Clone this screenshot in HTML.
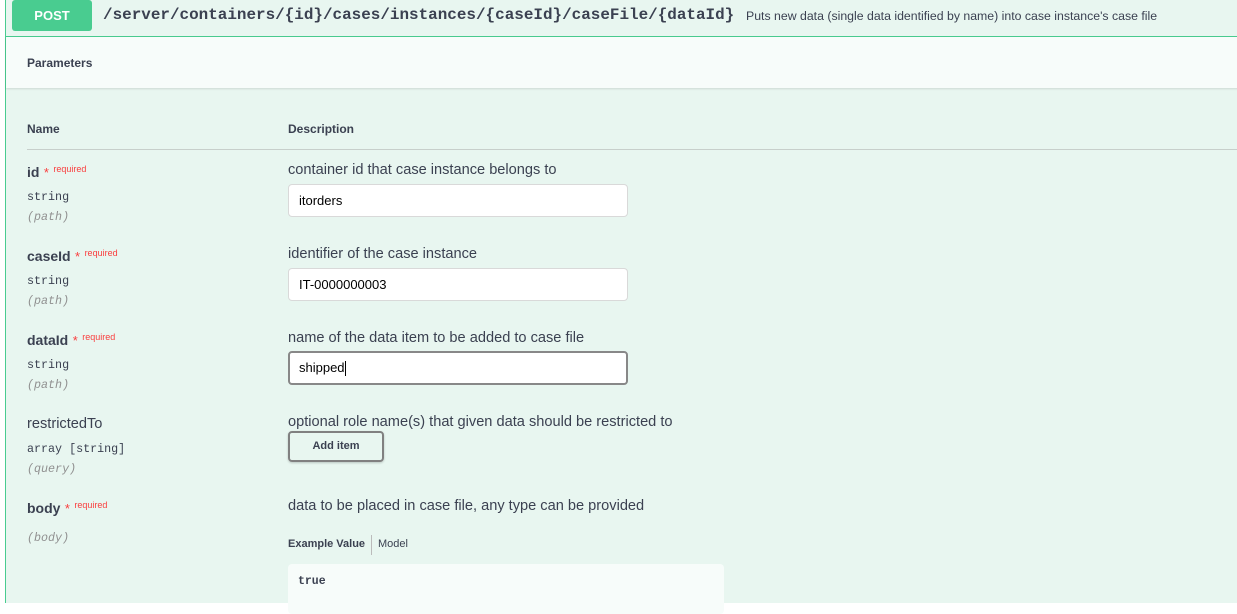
<!DOCTYPE html>
<html><head><style>
*{margin:0;padding:0;box-sizing:border-box}
body{width:1237px;height:603px;overflow:hidden;background:#fff;font-family:"Liberation Sans",sans-serif;color:#3b4151;position:relative}
.wrap{position:absolute;left:5px;top:0;width:1240px;height:603px;background:#e8f6f0;border-left:1px solid #49cc90}
.a{position:absolute;white-space:nowrap}
.hdr{position:absolute;left:0;top:0;width:1240px;height:37px;border-bottom:1px solid #49cc90}
.post{position:absolute;left:6px;top:0;width:80px;height:31px;background:#49cc90;border-radius:3px;color:#fff;font-weight:bold;font-size:13px;text-align:center;line-height:31px}
.params{position:absolute;left:0;top:37px;width:1240px;height:51px;background:#f7fcfa;box-shadow:0 1px 2px rgba(0,0,0,.12)}
.mono{font-family:"Liberation Mono",monospace}
.nm{font-size:14px;font-weight:bold}
.req{color:#f93e3e;font-size:9px}
.star{color:#f93e3e;font-size:13px}
.typ{font-family:"Liberation Mono",monospace;font-size:11.7px;color:#3b4151}
.loc{font-family:"Liberation Mono",monospace;font-size:11.7px;color:#909090;font-style:italic}
.desc{font-size:14.6px}
.inp{position:absolute;left:282px;width:340px;height:33px;background:#fff;border:1px solid #d9d9d9;border-radius:4px;font-size:13px;padding-left:10px;line-height:31px;color:#000}
</style></head><body>
<div class="wrap">
<div class="hdr">
<div class="post">POST</div>
<div class="a mono" style="left:97px;top:6px;font-size:15.95px;font-weight:bold;color:#3b4151">/server/containers/{id}/cases/instances/{caseId}/caseFile/{dataId}</div>
<div class="a" style="left:740px;top:9px;font-size:12.3px">Puts new data (single data identified by name) into case instance's case file</div>
</div>
<div class="params"><div class="a" style="left:21px;top:19px;font-size:12px;font-weight:bold">Parameters</div></div>
<div class="a" style="left:21px;top:122px;font-size:12px;font-weight:bold">Name</div>
<div class="a" style="left:282px;top:122px;font-size:12px;font-weight:bold">Description</div>
<div style="position:absolute;left:21px;top:149px;width:1220px;height:1px;background:#c7cfcb"></div>

<div class="a" style="left:21px;top:164px"><span class="nm">id</span> <span class="star">*</span> <span class="req" style="position:relative;top:-5px">required</span></div>
<div class="a typ" style="left:21px;top:190px">string</div>
<div class="a loc" style="left:21px;top:210px">(path)</div>
<div class="a desc" style="left:282px;top:162px">container id that case instance belongs to</div>
<div class="inp" style="top:184px">itorders</div>

<div class="a" style="left:21px;top:248px"><span class="nm">caseId</span> <span class="star">*</span> <span class="req" style="position:relative;top:-5px">required</span></div>
<div class="a typ" style="left:21px;top:274px">string</div>
<div class="a loc" style="left:21px;top:294px">(path)</div>
<div class="a desc" style="left:282px;top:246px">identifier of the case instance</div>
<div class="inp" style="top:268px">IT-0000000003</div>

<div class="a" style="left:21px;top:332px"><span class="nm">dataId</span> <span class="star">*</span> <span class="req" style="position:relative;top:-5px">required</span></div>
<div class="a typ" style="left:21px;top:358px">string</div>
<div class="a loc" style="left:21px;top:378px">(path)</div>
<div class="a desc" style="left:282px;top:330px">name of the data item to be added to case file</div>
<div class="inp" style="top:351px;border:2px solid #888;height:34px;line-height:30px;padding-left:9px">shipped<span style="display:inline-block;width:1px;height:15px;background:#000;vertical-align:middle"></span></div>

<div class="a" style="left:21px;top:416px;font-size:14.6px">restrictedTo</div>
<div class="a typ" style="left:21px;top:442px">array [string]</div>
<div class="a loc" style="left:21px;top:462px">(query)</div>
<div class="a desc" style="left:282px;top:414px">optional role name(s) that given data should be restricted to</div>
<div style="position:absolute;left:282px;top:431px;width:96px;height:31px;border:2px solid #808080;border-radius:4px;font-size:11px;font-weight:bold;text-align:center;line-height:27px;box-shadow:0 1px 2px rgba(0,0,0,.2)">Add item</div>

<div class="a" style="left:21px;top:500px"><span class="nm">body</span> <span class="star">*</span> <span class="req" style="position:relative;top:-5px">required</span></div>
<div class="a loc" style="left:21px;top:531px">(body)</div>
<div class="a desc" style="left:282px;top:498px">data to be placed in case file, any type can be provided</div>
<div class="a" style="left:282px;top:538px;font-size:11px;font-weight:bold">Example Value</div>
<div style="position:absolute;left:365px;top:535px;width:1px;height:20px;background:#bbb"></div>
<div class="a" style="left:372px;top:538px;font-size:11px">Model</div>
<div style="position:absolute;left:282px;top:564px;width:436px;height:50px;background:#f7fcfa;border-radius:4px"></div>
<div class="a mono" style="left:292px;top:575px;font-size:11.5px;font-weight:bold">true</div>
</div>
</body></html>
